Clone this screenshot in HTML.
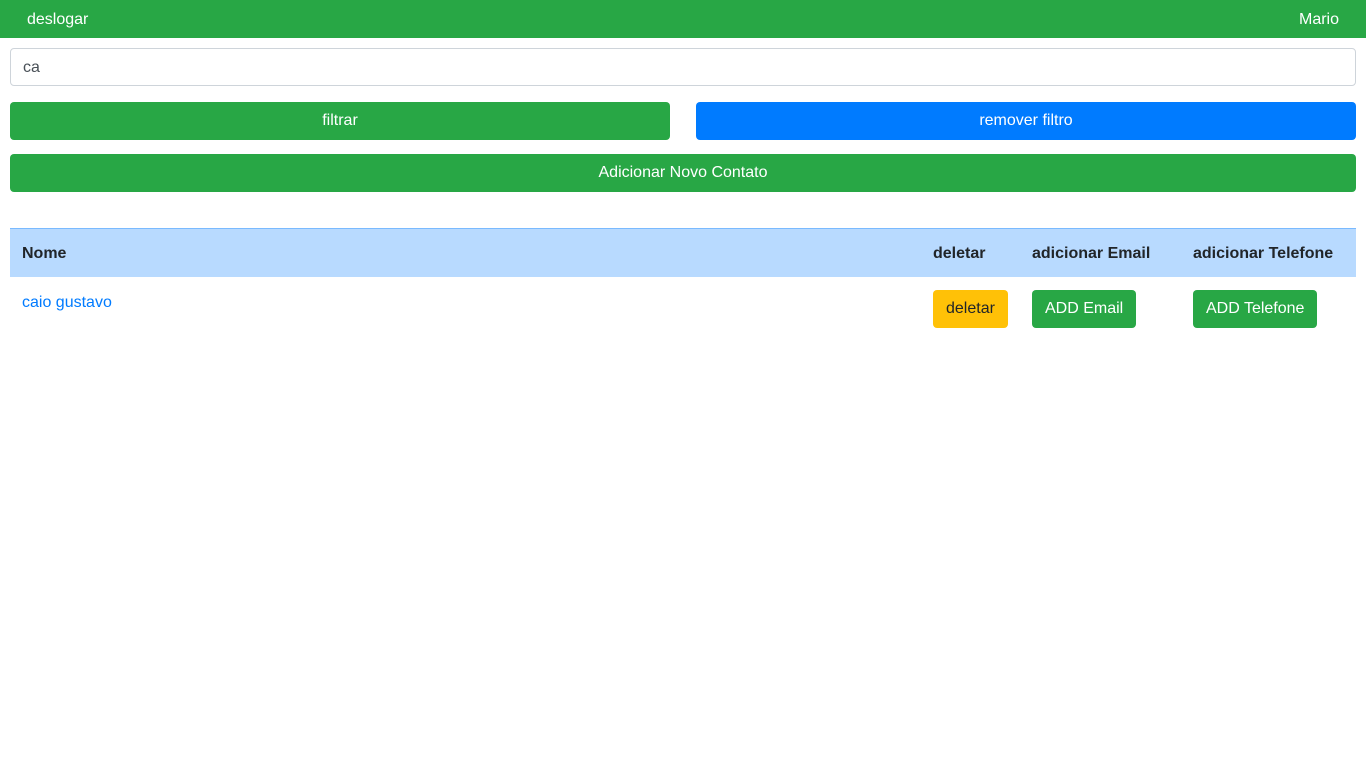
<!DOCTYPE html>
<html><head><style>
body{margin:0;font-family:"Liberation Sans",sans-serif;font-size:16px;color:#212529;background:#fff;}
.nav{height:38px;background:#28a745;color:#fff;position:relative}
.nav span{position:absolute;top:11px;line-height:18px}
.inp{position:absolute;left:10px;top:48px;border:1px solid #ced4da;border-radius:4px;box-sizing:border-box;width:1346px;height:38px;padding:0 12px;line-height:38px;color:#495057}
.btn{position:absolute;height:38px;line-height:38px;text-align:center;color:#fff;border-radius:4px}
.g{background:#28a745}.b{background:#007bff}
.thead{position:absolute;left:10px;top:228px;width:1346px;height:49px;background:#b8daff;border-top:1px solid #7abaff;box-sizing:border-box;font-weight:bold}
.thead span{position:absolute;top:16px}
.sm{position:absolute;height:38px;line-height:38px;padding:0 13px;border-radius:4px;color:#fff}
.sm.y{background:#ffc107;color:#212529}
</style></head><body>
<div class="nav"><span style="left:27px">deslogar</span><span style="left:1299px">Mario</span></div>
<div class="inp">ca</div>
<div class="btn g" style="left:10px;top:102px;width:660px">filtrar</div>
<div class="btn b" style="left:696px;top:102px;width:660px">remover filtro</div>
<div class="btn g" style="left:10px;top:154px;width:1346px">Adicionar Novo Contato</div>
<div class="thead"><span style="left:12px">Nome</span><span style="left:923px">deletar</span><span style="left:1022px">adicionar Email</span><span style="left:1183px">adicionar Telefone</span></div>
<div style="position:absolute;left:22px;top:294px;color:#007bff">caio gustavo</div>
<div class="sm y" style="left:933px;top:290px">deletar</div>
<div class="sm g" style="left:1032px;top:290px">ADD Email</div>
<div class="sm g" style="left:1193px;top:290px">ADD Telefone</div>
</body></html>
